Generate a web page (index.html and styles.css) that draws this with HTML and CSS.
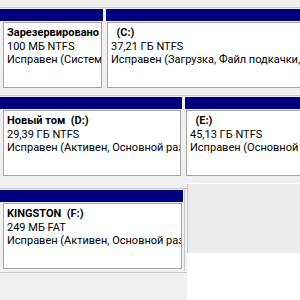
FILE: index.html
```html
<!DOCTYPE html>
<html lang="ru">
<head>
  <meta charset="UTF-8">
  <title>Управление дисками</title>
  <link rel="stylesheet" href="styles.css">
</head>
<body>
<div class="disk-list">
  <div class="row row-top">
    <div class="part part-sys">
      <div class="bar"></div>
      <div class="body"><div class="vol">
        <b>Зарезервировано системой</b>
        <span>100 МБ NTFS</span>
        <span>Исправен (Система, Активен, Основной раздел)</span>
      </div></div>
    </div>
    <div class="sep"></div>
    <div class="part part-grow">
      <div class="bar"></div>
      <div class="body"><div class="vol">
        <b>&nbsp;&nbsp;(C:)</b>
        <span>37,21 ГБ NTFS</span>
        <span>Исправен (Загрузка, Файл подкачки, Аварийный дамп, Основной раздел)</span>
      </div></div>
    </div>
  </div>

  <div class="row">
    <div class="part part-d">
      <div class="bar"></div>
      <div class="body"><div class="vol">
        <b>Новый том&nbsp; (D:)</b>
        <span>29,39 ГБ NTFS</span>
        <span>Исправен (Активен, Основной раздел)</span>
      </div></div>
    </div>
    <div class="sep"></div>
    <div class="part part-grow">
      <div class="bar"></div>
      <div class="body"><div class="vol">
        <b>&nbsp;&nbsp;(E:)</b>
        <span>45,13 ГБ NTFS</span>
        <span>Исправен (Основной раздел)</span>
      </div></div>
    </div>
  </div>

  <div class="bottom">
    <div class="left-col">
      <div class="row">
        <div class="part part-f">
          <div class="bar"></div>
          <div class="body"><div class="vol">
            <b>KINGSTON&nbsp; (F:)</b>
            <span>249 МБ FAT</span>
            <span>Исправен (Активен, Основной раздел)</span>
          </div></div>
        </div>
        <div class="sep sep-end"></div>
      </div>
      <div class="foot"></div>
    </div>
    <div class="side">
      <div class="panel"></div>
    </div>
  </div>
</div>
</body>
</html>
```

FILE: styles.css
```css
html, body {
  margin: 0;
  height: 100%;
  overflow: hidden;
  background: #f0f0f0;
}
.disk-list {
  width: 300px;
  height: 300px;
  display: flex;
  flex-direction: column;
  font-family: Roboto, "Noto Sans", sans-serif;
  font-size: 11px;
  color: #000;
}
.row {
  display: flex;
  border-top: 1px solid #c8c8c8;
  padding-top: 1px;
  margin-bottom: 5px;
}
.row-top {
  margin-top: 7px;
}
.part {
  display: flex;
  flex-direction: column;
}
.part-sys { width: 103px; }
.part-d { width: 182px; }
.part-f { width: 183px; }
.part-grow { flex: 1; }
.bar {
  height: 12px;
  background: #00007f;
}
.body {
  padding: 1px 1px 2px 1px;
}
.part-sys .body, .part-d .body, .part-f .body {
  padding-left: 3px;
}
.part-grow .body {
  padding-right: 2px;
}
.vol {
  border: 1px solid #a4a4a4;
  background: #fff;
  padding: 3px 0 0 3px;
  box-sizing: border-box;
  height: 66px;
  overflow: hidden;
  white-space: nowrap;
  line-height: 13.5px;
}
.vol b, .vol span {
  display: block;
}
.sep {
  width: 1px;
  margin: 0 1px 0 2px;
  background: #c8c8c8;
}
.sep-end {
  margin: 0 0 0 1px;
}
.bottom {
  flex: 1;
  display: flex;
}
.left-col {
  width: 187px;
  padding-top: 5px;
  display: flex;
  flex-direction: column;
}
.left-col .row {
  margin-bottom: 1px;
}
.foot {
  flex: 1;
  border-top: 1px solid #c8c8c8;
}
.side {
  flex: 1;
  background: #fff;
  padding-top: 1px;
}
.panel {
  height: 69px;
  background: #ececec;
  border-left: 1px solid #c8c8c8;
}
```
